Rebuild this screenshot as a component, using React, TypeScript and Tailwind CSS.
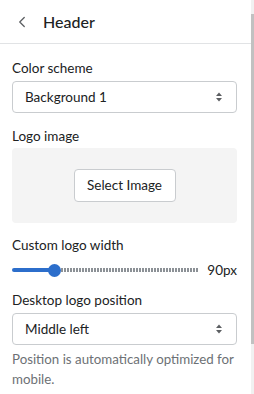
import { ChevronLeft } from "lucide-react";

function SelectArrows() {
  return (
    <svg width="8" height="12" viewBox="0 0 8 12" className="shrink-0">
      <path d="M4 1.5 L7 5 H1 Z" fill="#5c5f62" />
      <path d="M4 10.5 L7 7 H1 Z" fill="#5c5f62" />
    </svg>
  );
}

function FakeSelect({ value }: { value: string }) {
  return (
    <div className="flex h-8 items-center justify-between rounded-[4px] border border-[#c9cccf] bg-white pl-3 pr-[13px] text-[13.5px] text-[#202223]">
      <span>{value}</span>
      <SelectArrows />
    </div>
  );
}

export default function App() {
  return (
    <div
      className="flex h-[394px] w-[254px] bg-white text-[#202223]"
      style={{ fontFamily: 'Lato, "Open Sans", sans-serif' }}
    >
      <div className="flex-1">
        {/* HEADER */}
        <div className="flex h-[44px] items-center gap-[12px] border-b border-[#e1e3e5] pl-[13px]">
          <ChevronLeft size={18} strokeWidth={1.75} className="text-[#5c5f62]" />
          <span className="text-[16px] font-medium">Header</span>
        </div>

        <div className="pl-3 pr-[14px] pt-[14px]">
          {/* COLOR SCHEME */}
          <div className="mb-[3px] text-[13.5px] leading-5">Color scheme</div>
          <FakeSelect value="Background 1" />

          {/* LOGO */}
          <div className="mt-[13px] mb-[2px] text-[13.5px] leading-5">Logo image</div>
          <div className="flex h-[75px] items-center justify-center rounded-[4px] bg-[#f4f4f4]">
            <button className="h-[33px] w-[102px] rounded-[4px] border border-[#c9cccf] bg-white text-[13.5px] text-[#202223]">
              Select Image
            </button>
          </div>

          {/* SLIDER */}
          <div className="mt-[12px] text-[13.5px] leading-5">Custom logo width</div>
          <div className="mt-[5px] flex h-5 items-center">
            <div className="relative flex h-4 flex-1 items-center">
              <div className="h-[4px] w-[43px] rounded-l-full bg-[#2c6ecb]" />
              <div className="h-[4px] flex-1 bg-[repeating-linear-gradient(90deg,#8c9196_0_2px,transparent_2px_3px)]" />
              <div className="absolute left-[36px] top-[2px] h-[13px] w-[13px] rounded-full bg-[#2c6ecb]" />
            </div>
            <span className="ml-[8px] text-[13.5px]">90px</span>
          </div>

          {/* POSITION */}
          <div className="mt-[10px] mb-[3px] text-[13.5px] leading-5">Desktop logo position</div>
          <FakeSelect value="Middle left" />
          <p className="mt-[4px] text-[13.3px] leading-5 text-[#6d7175]">
            Position is automatically optimized for mobile.
          </p>
        </div>
      </div>

      {/* SCROLLBAR */}
      <div className="flex w-[3px] flex-col bg-[#f1f1f1]">
        <div className="mt-[14px] h-[330px] bg-[#c1c1c1]" />
      </div>
    </div>
  );
}
